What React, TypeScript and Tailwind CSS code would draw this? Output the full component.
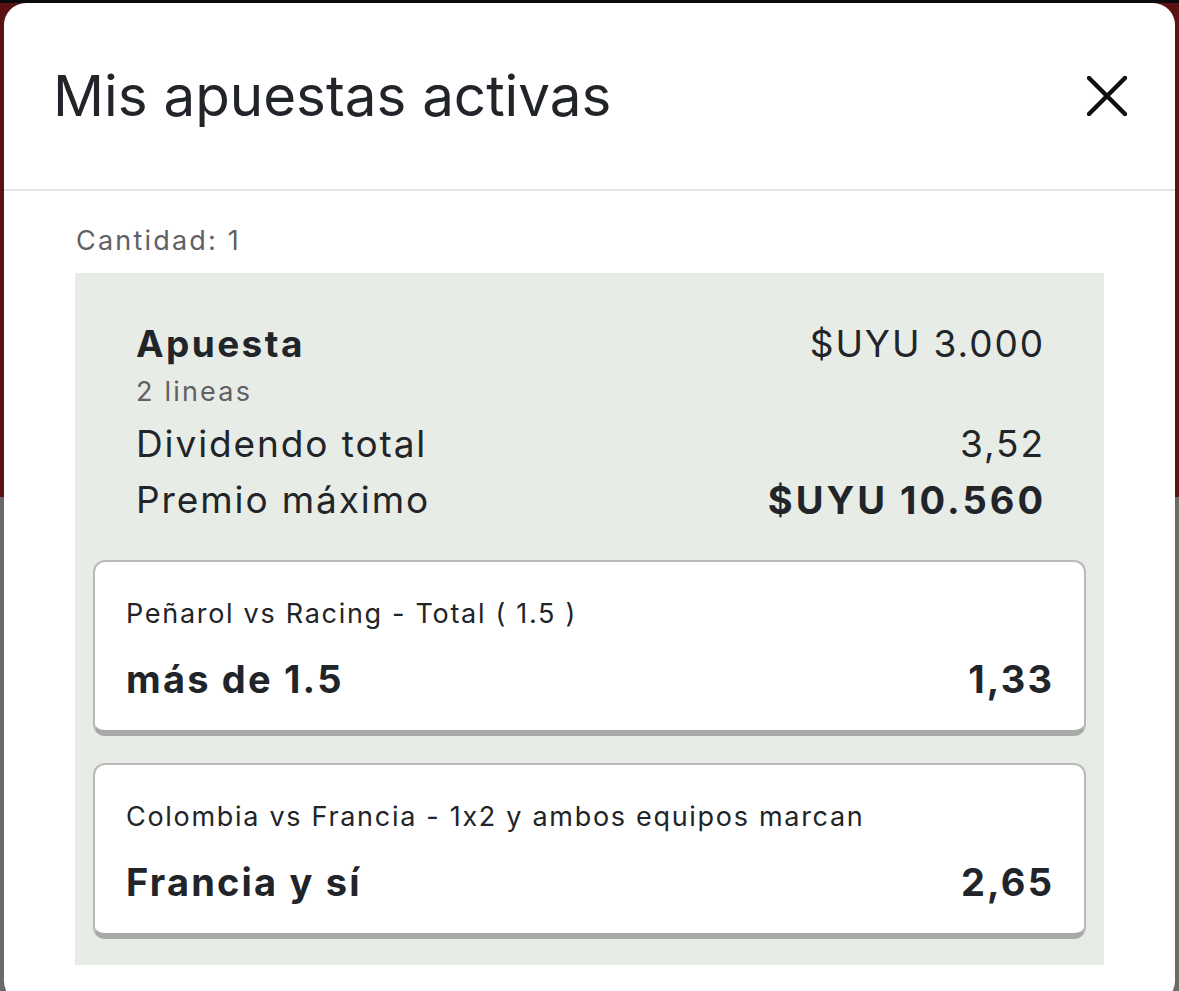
const Row = ({ left, right, boldLeft, boldRight }: { left: string; right: string; boldLeft?: boolean; boldRight?: boolean }) => (
  <div className="flex justify-between items-center h-[44px] text-[37px] leading-[44px] text-[#212529] tracking-[1.9px]">
    <span className={boldLeft ? 'font-bold tracking-[2.4px]' : ''}>{left}</span>
    <span className={boldRight ? 'font-bold text-[38px] tracking-[3px] mr-[-3px]' : 'mr-[-1.9px]'}>{right}</span>
  </div>
);

const Line = ({ market, pick, odds }: { market: string; pick: string; odds: string }) => (
  <div className="bg-white rounded-[12px] border-2 border-[#b9bab8] border-b-[6px] border-b-[#a8aaa7] pl-[31px] pr-[32px] pt-[36px] pb-[28px]">
    <div className="text-[27px] leading-[32px] text-[#212529] tracking-[1.7px]">{market}</div>
    <div className="mt-[26px] flex justify-between items-center text-[38px] leading-[46px] font-bold text-[#212529] tracking-[2.2px]">
      <span>{pick}</span>
      <span className="mr-[-2.2px]">{odds}</span>
    </div>
  </div>
);

export default function App() {
  return (
    <div className="w-[1179px] h-[991px] overflow-hidden pt-[3px] px-[4px] bg-[linear-gradient(to_bottom,#0a0a0a_0,#0a0a0a_3px,#5a1212_3px,#5a1212_497px,#6a6a6a_497px)]">
      <div className="h-[1000px] bg-white rounded-[22px] font-['Inter','Noto_Sans',sans-serif] [font-feature-settings:'calt'_0]">
        <div className="h-[188px] flex items-center justify-between pl-[49px] pr-[48px] border-b-2 border-[#e4e4e4]">
          <h1 className="text-[56.5px] leading-[70px] text-[#212529] font-normal">Mis apuestas activas</h1>
          <button className="w-[40px] h-[40px]" aria-label="Cerrar">
            <svg viewBox="0 0 40 40" width="40" height="40" fill="none" stroke="#111" strokeWidth="4.5" strokeLinecap="round">
              <line x1="2" y1="2" x2="38" y2="38" />
              <line x1="38" y1="2" x2="2" y2="38" />
            </svg>
          </button>
        </div>

        <div className="px-[71px] pt-[34px]">
          <div className="text-[27px] leading-[32px] text-[#5f6163] pl-[1px] tracking-[2.2px]">Cantidad: 1</div>

          <div className="mt-[16px] bg-[#e8ece6] px-[18px] pt-[49px] pb-[26px]">
            <div className="px-[43px]">
              <Row left="Apuesta" right="$UYU 3.000" boldLeft />
              <div className="mt-[10px] text-[27px] leading-[32px] text-[#5f6163] tracking-[2.2px]">2 lineas</div>
              <div className="mt-[14px]">
                <Row left="Dividendo total" right="3,52" />
              </div>
              <div className="mt-[12px]">
                <Row left="Premio máximo" right="$UYU 10.560" boldRight />
              </div>
            </div>

            <div className="mt-[38px] flex flex-col gap-[27px]">
              <Line market="Peñarol vs Racing - Total ( 1.5 )" pick="más de 1.5" odds="1,33" />
              <Line market="Colombia vs Francia - 1x2 y ambos equipos marcan" pick="Francia y sí" odds="2,65" />
            </div>
          </div>
        </div>
      </div>
    </div>
  );
}
